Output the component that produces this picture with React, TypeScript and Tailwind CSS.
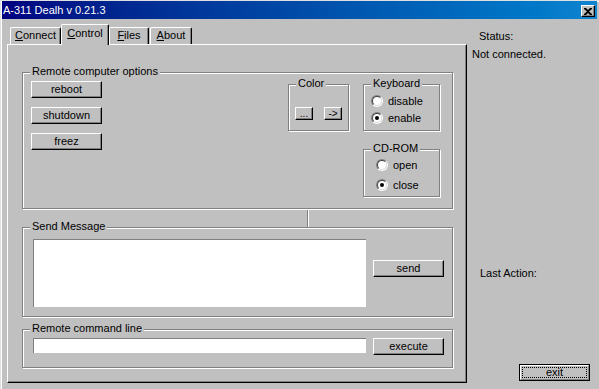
import React from "react";

const btn =
  "flex items-center justify-center bg-[#c0c0c0] border border-t-white border-l-white border-b-black border-r-black shadow-[inset_-1px_-1px_0_#808080] leading-[13px]";

function Group({
  label,
  className,
  children,
}: {
  label: string;
  className: string;
  children?: React.ReactNode;
}) {
  return (
    <div
      className={`relative shrink-0 border border-[#808080] shadow-[1px_1px_0_#fff,inset_1px_1px_0_#fff] ${className}`}
    >
      <span className="absolute top-[-8px] left-[7px] bg-[#c0c0c0] px-[2px] leading-[13px] whitespace-nowrap">
        {label}
      </span>
      {children}
    </div>
  );
}

function Radio({ checked, label }: { checked?: boolean; label: string }) {
  return (
    <div className="flex items-center h-[12px]">
      <div className="w-[12px] h-[12px] rounded-full border border-t-[#808080] border-l-[#808080] border-b-white border-r-white flex shrink-0">
        <div className="flex-1 rounded-full border border-t-[#404040] border-l-[#404040] border-b-[#dfdfdf] border-r-[#dfdfdf] bg-white flex items-center justify-center">
          {checked && <div className="w-[4px] h-[4px] rounded-full bg-black" />}
        </div>
      </div>
      <span className="ml-[5px] leading-[13px]">{label}</span>
    </div>
  );
}

function Tab({
  children,
  className,
  selected,
}: {
  children: React.ReactNode;
  className: string;
  selected?: boolean;
}) {
  return (
    <div
      className={`flex justify-center bg-[#c0c0c0] rounded-t-[2px] border-t border-l border-t-white border-l-white border-r border-r-black shadow-[inset_-1px_0_0_#808080] leading-[14px] ${
        selected ? "relative z-10 h-[21px] -mb-px pt-[1px]" : "h-[17px]"
      } ${className}`}
    >
      {children}
    </div>
  );
}

export default function App() {
  return (
    <div className="w-[599px] h-[389px] bg-[#c0c0c0] overflow-hidden flex flex-col pt-[1px] px-[2px] shadow-[inset_1px_1px_0_#dfdfdf,inset_2px_2px_0_#fff] text-[11px] leading-[13px] text-black font-['Liberation_Sans',Arial,sans-serif]">
      {/* Title bar */}
      <div className="h-[18px] shrink-0 flex items-center bg-linear-to-r from-[#000080] to-[#1084d0]">
        <span className="ml-[1px] text-white text-[11px] leading-[13px] whitespace-nowrap">
          A-311 Dealh v 0.21.3
        </span>
        <div className="ml-auto mr-[2px] w-[14px] h-[12px] self-start mt-[4px] flex items-center justify-center bg-[#c0c0c0] border border-t-white border-l-white border-b-black border-r-black shadow-[inset_-1px_-1px_0_#808080]">
          <svg width="8" height="7" viewBox="0 0 8 7">
            <path d="M0 0h2l2 2 2-2h2v1L5 3.5 8 6v1H6L4 5 2 7H0V6l3-2.5L0 1z" fill="#000" />
          </svg>
        </div>
      </div>

      {/* Body */}
      <div className="flex flex-1">
        {/* Left: tabs */}
        <div className="flex flex-col pl-[5px] pt-[5px] w-[465px] shrink-0">
          <div className="flex items-end h-[20px] ml-[3px]">
            <Tab className="w-[51px]">
              <span>
                <span className="underline">C</span>onnect
              </span>
            </Tab>
            <Tab className="w-[48px]" selected>
              <span>
                <span className="underline">C</span>ontrol
              </span>
            </Tab>
            <Tab className="w-[40px]">
              <span>
                <span className="underline">F</span>iles
              </span>
            </Tab>
            <Tab className="w-[42px] ml-[1px]">
              <span>
                <span className="underline">A</span>bout
              </span>
            </Tab>
          </div>

          <div className="w-[460px] h-[339px] flex flex-col pl-[14px] pt-[27px] border-t border-l border-t-white border-l-white border-r border-b border-r-black border-b-black shadow-[inset_-1px_-1px_0_#808080]">
            {/* Remote computer options */}
            <Group label="Remote computer options" className="w-[431px] h-[137px] flex items-start">
              <div className="flex flex-col gap-[9px] ml-[8px] mt-[8px]">
                <div className={`${btn} w-[71px] h-[17px]`}>reboot</div>
                <div className={`${btn} w-[71px] h-[17px]`}>shutdown</div>
                <div className={`${btn} w-[71px] h-[17px]`}>freez</div>
              </div>
              <Group label="Color" className="w-[61px] h-[47px] ml-[186px] mt-[11px] flex items-start pl-[6px] pt-[22px]">
                <div className={`${btn} w-[18px] h-[13px] text-[10px] leading-[10px]`}>...</div>
                <div className={`${btn} w-[18px] h-[13px] ml-[11px] text-[10px] leading-[10px]`}>-&gt;</div>
              </Group>
              <div className="flex flex-col ml-[14px] mt-[11px]">
                <Group label="Keyboard" className="w-[77px] h-[47px] flex flex-col gap-[5px] pl-[7px] pt-[10px]">
                  <Radio label="disable" />
                  <Radio label="enable" checked />
                </Group>
                <Group label="CD-ROM" className="w-[77px] h-[48px] mt-[18px] flex flex-col gap-[8px] pl-[12px] pt-[9px]">
                  <Radio label="open" />
                  <Radio label="close" checked />
                </Group>
              </div>
            </Group>

            {/* small splitter */}
            <div className="ml-[285px] mt-[1px] h-[17px] w-[2px] border-l border-l-[#808080] border-r border-r-white" />

            {/* Send Message */}
            <Group label="Send Message" className="w-[431px] h-[90px] flex items-start">
              <div className="ml-[10px] mt-[11px] w-[333px] h-[68px] bg-white border-t border-l border-[#808080]" />
              <div className={`${btn} ml-[7px] mt-[32px] w-[71px] h-[17px]`}>send</div>
            </Group>

            {/* Remote command line */}
            <Group label="Remote command line" className="w-[431px] h-[39px] mt-[12px] flex items-start">
              <div className="ml-[10px] mt-[8px] w-[333px] h-[15px] bg-white border-t border-l border-[#808080]" />
              <div className={`${btn} ml-[7px] mt-[8px] w-[71px] h-[17px]`}>execute</div>
            </Group>
          </div>
        </div>

        {/* Right column */}
        <div className="flex flex-col flex-1">
          <span className="ml-[12px] mt-[11px]">Status:</span>
          <span className="ml-[5px] mt-[5px]">Not connected.</span>
          <span className="ml-[13px] mt-[206px]">Last Action:</span>
          <div className="ml-[52px] mt-[84px] w-[71px] h-[17px] flex border border-black">
            <div className="flex-1 flex bg-[#c0c0c0] border border-t-white border-l-white border-b-[#808080] border-r-[#808080] p-[1px]">
              <div className="flex-1 flex items-center justify-center border border-dotted border-black leading-[11px]">
                exit
              </div>
            </div>
          </div>
        </div>
      </div>
    </div>
  );
}
